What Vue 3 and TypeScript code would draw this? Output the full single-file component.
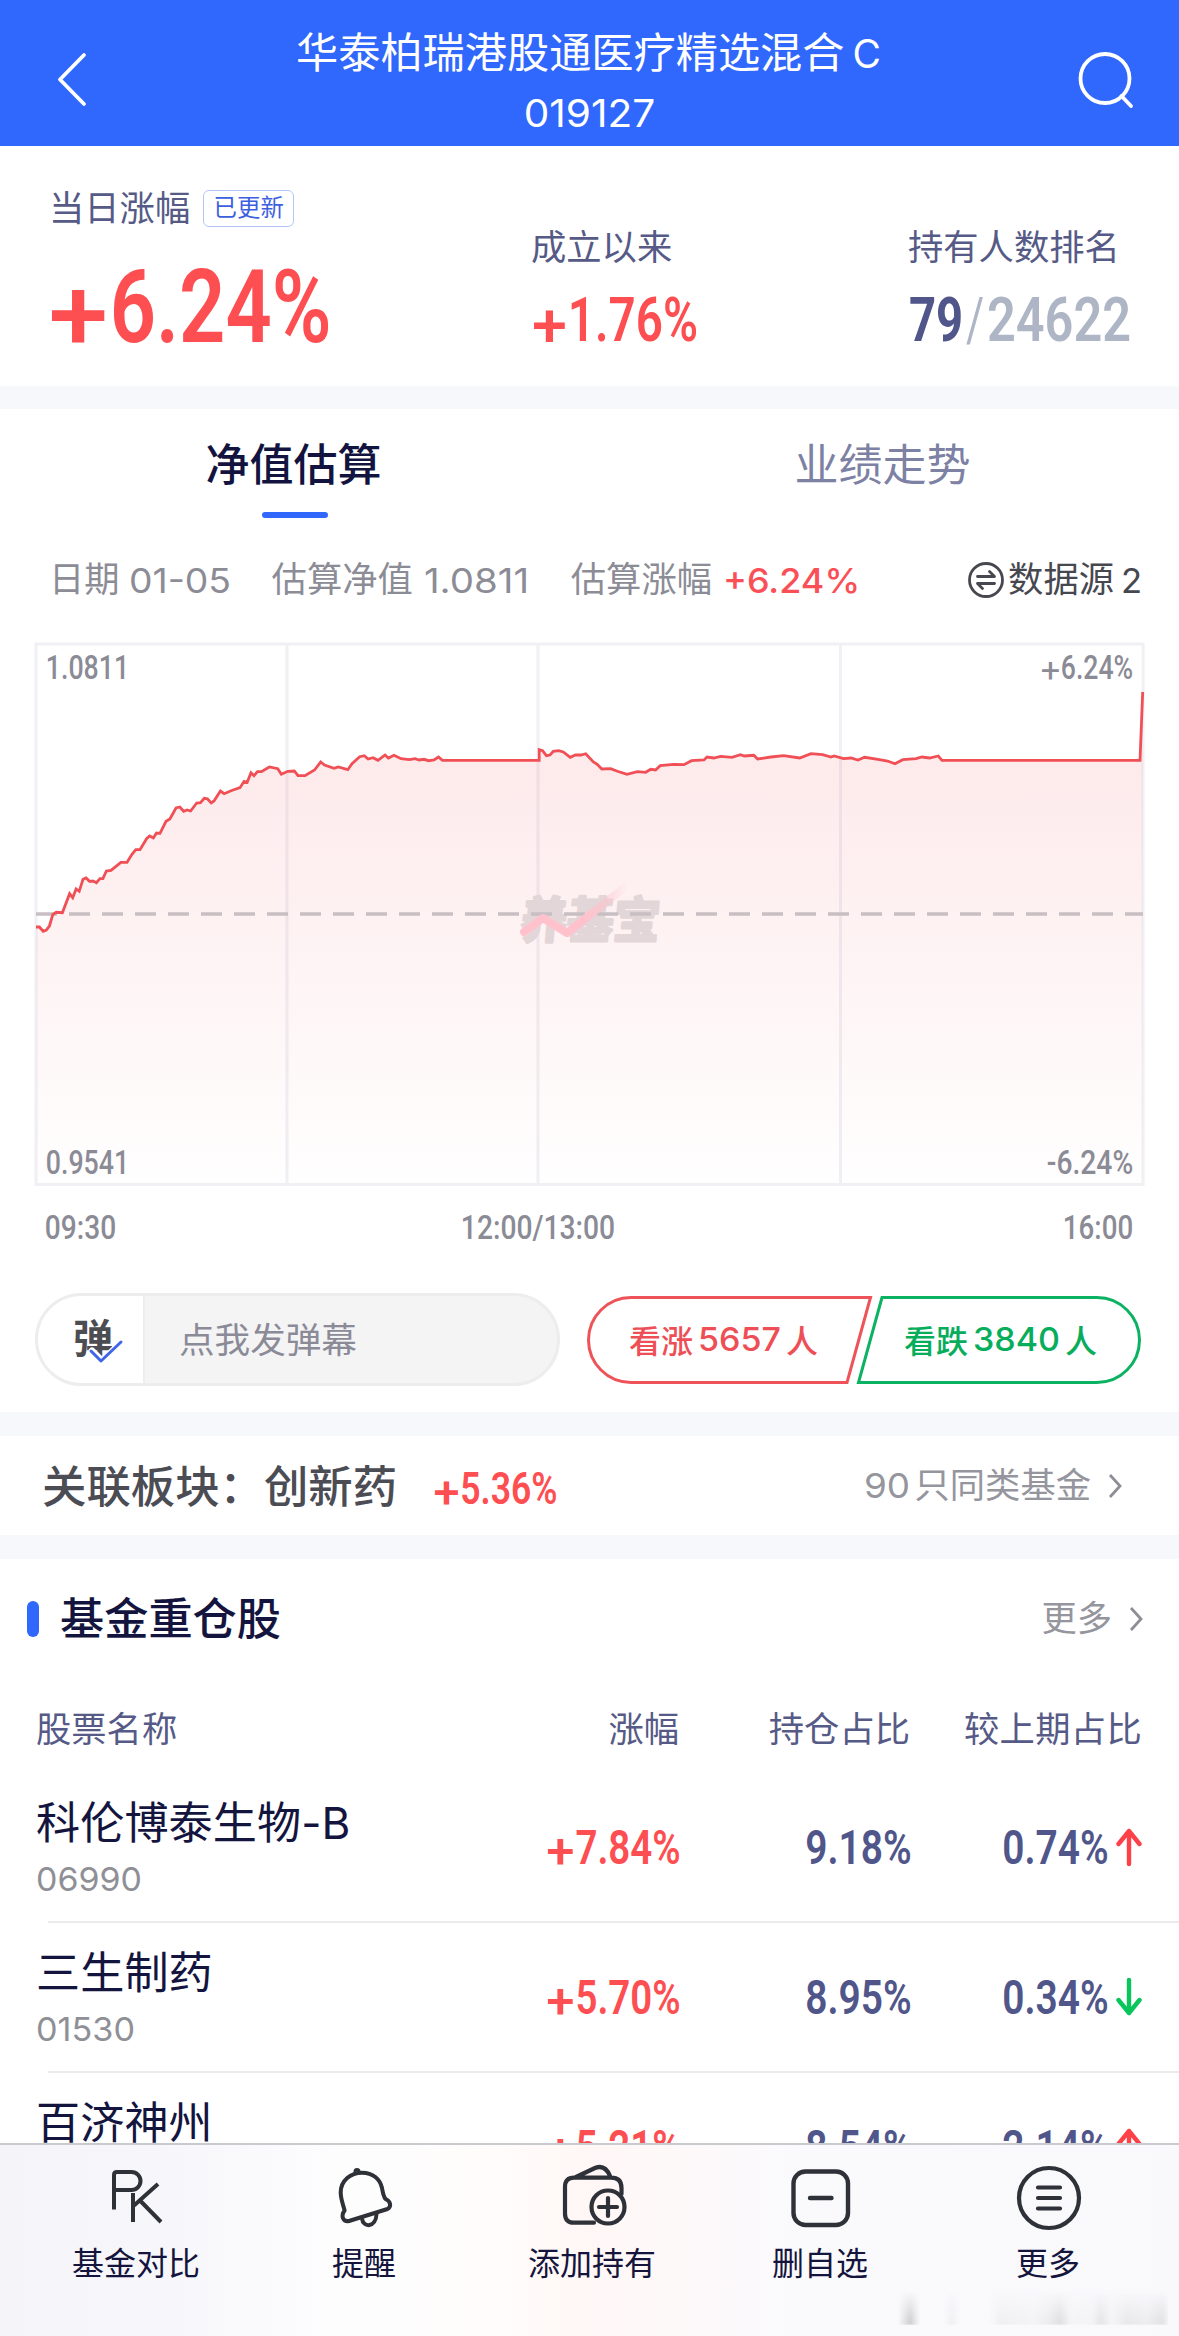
<script setup lang="ts">
import { h, type FunctionalComponent } from 'vue'

interface NumProps {
  t: string
  w: number
  h: number
  sf?: boolean
  weight?: number
}

/* A figure set to an exact ink width (w) and cap height (h). */
const Num: FunctionalComponent<NumProps> = (p) => {
  const size = p.h / (p.sf ? 0.727 : 0.711)
  const pad = size * (p.sf ? 0.06 : 0.035)
  const run = (t: string, x: number, w: number, dy: number, weight: number) =>
    h(
      'text',
      {
        x: x - pad,
        y: p.h + dy,
        textLength: w + pad * 2,
        lengthAdjust: 'spacingAndGlyphs',
        fill: 'currentColor',
        'font-family': p.sf ? 'Inter, sans-serif' : 'Roboto, sans-serif',
        'font-size': size,
        'font-weight': weight,
      },
      t,
    )
  const weight = p.weight ?? (p.sf ? 400 : 600)
  /* The condensed face has a light, wide plus sign that stands on the baseline. */
  const signed = !p.sf && p.t.startsWith('+')
  const parts = signed
    ? [
        run('+', 0, p.w * 0.19, size * 0.08, weight - 100),
        run(p.t.slice(1), p.w * 0.222, p.w * 0.778, 0, weight),
      ]
    : [run(p.t, 0, p.w, 0, weight)]
  return h('svg', { width: p.w, height: p.h, style: 'overflow:visible;flex:none;display:block' }, parts)
}
Num.props = {
  t: { type: String, required: true },
  w: { type: Number, required: true },
  h: { type: Number, required: true },
  sf: Boolean,
  weight: Number,
}

const trend =
  '0,283 3.4,283 7.2,287.3 10.3,286 13.4,282 16.8,270.7 20.2,268.3 26.4,268.7 33.6,249.7 36.7,253.7 40.1,245 43.2,247.3 47,235.3 50.1,234 53.5,237.3 57,237 60.4,238.7 63.9,234.7 66.9,234.7 70.4,227 75,226.3 84.9,218.3 91,218.3 96,210.3 99.8,205.7 104,205.7 110.6,194.7 113.6,192 117.4,194 120.5,189 124,189.3 130,177.3 133.9,175 140,164 143.8,163 147.7,167.3 151,166 154.6,167 160.7,159 164.5,158.7 168.3,154.3 171.4,154.7 175.2,159 178,157 184.4,147 188.2,149.7 195.1,146.7 204,143.7 208.1,137.3 211.2,138.3 215,128.7 218,131.7 221.5,127.7 225.4,127.7 233.4,123 241.8,124.7 245.3,130.3 251.8,127.3 258.3,127 262,131.7 269,131.7 278.5,126 284.7,118 288.5,121 298,124.3 302.3,123 311.8,125.7 316,119.7 323.7,112.7 328.3,111.7 332.1,115 337,113.7 342,116.3 349,111 352.4,114 358,111.3 365,114.7 373.4,115.7 379.2,114.7 383,116 388,115.3 392.6,116.7 398,116 402.5,113 406.4,116.3 503.2,116.3 503.2,105.7 506.6,106.7 510.4,111.7 514,111 517.3,107.3 522.7,106.7 527.3,108 534.2,113.3 539.5,111 544.9,111 549.7,109.7 557.4,118 561.2,120.3 565.8,125 574.6,124.7 581.4,127.3 591,130.3 601.3,127.7 609.7,128.3 614.7,125.3 619.6,126 624.2,121.7 637.6,120.3 648,120.7 655.5,116.7 668,116 671,113 677.7,114 684.6,112.3 696,113.3 704.4,110.7 708.3,112 717.8,111.3 721.6,115 735,113 747.6,111.7 763.7,114 775,109.7 786.6,110.7 795,113 798,112 807.6,114.7 815,114 822,116 828.6,113.3 842,115.3 851.5,117 859,119.7 866.8,115.7 880,114.7 886,113 893.5,114 902.3,112 906,116.3 1104,116.3 1106.7,48'

interface Holding {
  name: string
  code: string
  codeW: number
  change: string
  share: string
  delta: string
  up: boolean
}

const holdings: Holding[] = [
  { name: '科伦博泰生物-B', code: '06990', codeW: 102, change: '+7.84%', share: '9.18%', delta: '0.74%', up: true },
  { name: '三生制药', code: '01530', codeW: 95, change: '+5.70%', share: '8.95%', delta: '0.34%', up: false },
  { name: '百济神州', code: '06160', codeW: 95, change: '+5.21%', share: '8.54%', delta: '2.14%', up: true },
]
</script>

<template>
  <div class="page">
    <header class="top">
      <svg class="back" width="32" height="56" viewBox="0 0 32 56">
        <path d="M28 3 4 27.500 28 52" fill="none" stroke="#fff" stroke-width="3.800" stroke-linecap="round" stroke-linejoin="round" />
      </svg>
      <div class="heading">
        <h1>华泰柏瑞港股通医疗精选混合<span>C</span></h1>
        <Num t="019127" :w="127" :h="28" sf />
      </div>
      <svg class="search" width="60" height="60" viewBox="0 0 60 60">
        <g fill="none" stroke="#fff" stroke-width="3.800" stroke-linecap="round">
          <circle cx="28" cy="28.500" r="24.500" />
          <path d="M44.500 46 54 56" />
        </g>
      </svg>
    </header>

    <main class="scroll">
      <section class="summary">
        <div class="today">
          <div class="label">当日涨幅<span class="badge">已更新</span></div>
          <Num class="red big" t="+6.24%" :w="276" :h="73" />
        </div>
        <div class="stat">
          <div class="label">成立以来</div>
          <Num class="red" t="+1.76%" :w="162" :h="43" />
        </div>
        <div class="stat">
          <div class="label">持有人数排名</div>
          <div class="rank">
            <Num class="navy" t="79" :w="50" :h="43" :weight="700" />
            <Num class="slate" t="/" :w="14" :h="43" :weight="400" />
            <Num class="slate" t="24622" :w="140" :h="43" />
          </div>
        </div>
      </section>

      <div class="gap first"></div>

      <section class="valuation">
        <nav class="tabs">
          <div class="tab active">净值估算<i></i></div>
          <div class="tab">业绩走势</div>
        </nav>
        <div class="info">
          <span>日期</span><Num class="i1" t="01-05" :w="98" :h="25" sf />
          <span class="i2">估算净值</span><Num class="i3" t="1.0811" :w="101" :h="25" sf />
          <span class="i4">估算涨幅</span><Num class="i3 red" t="+6.24%" :w="133" :h="25" sf :weight="500" />
          <div class="source">
            <svg width="38" height="38" viewBox="0 0 38 38" fill="none" stroke="#47484f" stroke-width="2.800" stroke-linecap="round" stroke-linejoin="round">
              <circle cx="19" cy="19" r="16.500" />
              <path d="M10.500 15.500h17l-5-5M27.500 22.500h-17l5 5" />
            </svg>
            <span>数据源</span><Num t="2" :w="17" :h="25" sf />
          </div>
        </div>

        <svg class="chart" width="1111" height="599" viewBox="-2 -2 1111 599">
          <defs>
            <linearGradient id="area" gradientUnits="userSpaceOnUse" x1="0" y1="50" x2="0" y2="540">
              <stop offset="0" stop-color="#f04650" stop-opacity=".13" />
              <stop offset="1" stop-color="#f04650" stop-opacity=".005" />
            </linearGradient>
            <linearGradient id="streak" x1="0" y1="0" x2="1" y2="0">
              <stop offset=".6" stop-color="#ffc2cd" />
              <stop offset="1" stop-color="#ffc2cd" stop-opacity="0" />
            </linearGradient>
          </defs>
          <g fill="none" stroke="#f0f0f5" stroke-width="3">
            <rect x="0" y="0" width="1107" height="540.500" />
            <path d="M251 0v540M502 0v540M804.500 0v540" />
          </g>
          <polygon :points="`${trend} 1106.700,540 0,540`" fill="url(#area)" />
          <g transform="translate(484 288) skewX(-5)">
            <text
              textLength="139"
              lengthAdjust="spacingAndGlyphs"
              font-family="Noto Sans CJK SC, sans-serif"
              font-size="49"
              font-weight="700"
              fill="#e2d6d8"
              stroke="#e2d6d8"
              stroke-width="3"
              stroke-linejoin="round"
              y="6"
            >养基宝</text>
          </g>
          <path d="M0 270h1107" stroke="#c8bfc3" stroke-width="3.500" stroke-dasharray="21 12" />
          <path d="M488 288 507 274 531 289 592 241" fill="none" stroke="url(#streak)" stroke-width="8" stroke-linecap="round" stroke-linejoin="round" />
          <polyline :points="trend" fill="none" stroke="#f04f55" stroke-width="2.800" />
          <g class="axis">
            <Num x="11" y="11" t="1.0811" :w="81" :h="24" :weight="500" />
            <Num x="1006" y="11" t="+6.24%" :w="90" :h="24" :weight="500" />
            <Num x="11" y="506" t="0.9541" :w="81" :h="24" :weight="500" />
            <Num x="1012" y="506" t="-6.24%" :w="84" :h="24" :weight="500" />
            <Num x="10" y="571" t="09:30" :w="69" :h="24" :weight="500" />
            <Num x="426" y="571" t="12:00/13:00" :w="152" :h="24" :weight="500" />
            <Num x="1028" y="571" t="16:00" :w="68" :h="24" :weight="500" />
          </g>
        </svg>

        <div class="actions">
          <div class="barrage">
            <div class="toggle">
              <span>弹</span>
              <svg width="36" height="26" viewBox="0 0 36 26" fill="none" stroke-linecap="round" stroke-linejoin="round">
                <path d="M4 13 14 23 33 5" stroke="#fff" stroke-width="7" />
                <path d="M3 13 13 23 33 4" stroke="#3f66e8" stroke-width="3" />
              </svg>
            </div>
            <div class="hint">点我发弹幕</div>
          </div>
          <div class="votes">
            <svg class="outline" width="558" height="90" viewBox="0 0 558 90" fill="none" stroke-width="3">
              <path d="M45 2.500H284.500L261 87.500H45A42.500 42.500 0 0 1 45 2.500Z" stroke="#ee5359" />
              <path d="M296 2.500H511A42.500 42.500 0 0 1 511 87.500H272.500Z" stroke="#0bb261" />
            </svg>
            <div class="vote up">看涨<Num t="5657" :w="79" :h="24" sf :weight="500" />人</div>
            <div class="vote down">看跌<Num t="3840" :w="83" :h="24" sf :weight="500" />人</div>
          </div>
        </div>
      </section>

      <div class="gap"></div>

      <section class="related">
        <span class="sector">关联板块：创新药</span>
        <Num class="red pct" t="+5.36%" :w="121" :h="32" />
        <div class="more">
          <Num t="90" :w="42" :h="25" sf /><span class="similar">只同类基金</span>
          <svg class="chevron" width="14" height="26" viewBox="0 0 14 26"><path d="M2 2 12 13 2 24" /></svg>
        </div>
      </section>

      <div class="gap"></div>

      <section class="holdings">
        <div class="title">
          <i></i>
          <h2>基金重仓股</h2>
          <div class="more">
            <span>更多</span>
            <svg class="chevron" width="14" height="26" viewBox="0 0 14 26"><path d="M2 2 12 13 2 24" /></svg>
          </div>
        </div>
        <div class="cols head">
          <span>股票名称</span><span>涨幅</span><span>持仓占比</span><span>较上期占比</span>
        </div>
        <template v-for="s in holdings" :key="s.name">
          <div class="cols row">
            <div class="stock">
              <div class="name">{{ s.name }}</div>
              <Num class="code" :t="s.code" :w="s.codeW" :h="24" sf />
            </div>
            <Num class="red" :t="s.change" :w="131" :h="34" />
            <Num class="navy" :t="s.share" :w="103" :h="34" />
            <div class="delta">
              <Num class="navy" :t="s.delta" :w="103" :h="34" />
              <svg width="26" height="40" viewBox="0 0 26 40" fill="none" stroke-width="4.400" stroke-linecap="round" stroke-linejoin="round">
                <path v-if="s.up" d="M13 37V4M2.500 17 13 4 23.500 17" stroke="#fd4149" />
                <path v-else d="M13 3V36M2.500 23 13 36 23.500 23" stroke="#09c55c" />
              </svg>
            </div>
          </div>
          <div class="rule"></div>
        </template>
      </section>
    </main>

    <footer class="bar">
      <div class="item">
        <svg width="72" height="72" viewBox="0 0 72 72" stroke-width="4">
          <path d="M14 47.500V13Q14 10 17 10H31.500A8.800 8.800 0 0 1 31.500 28H14M33 31V60M58 22 34 43.500M40 38.500 61 60" />
        </svg>
        <span>基金对比</span>
      </div>
      <div class="item">
        <svg width="72" height="72" viewBox="0 0 72 72" stroke-width="4" stroke-linejoin="round">
          <path d="M16.600 48.500C15 42 12.700 37 12.700 30.500C12.700 18 23 10.700 34 10.700C45 10.700 52 17 54 26C55 31 55.300 34 57.500 37C63 39.500 63.500 45 59.500 47L21 59C15 60 12.500 54 16.600 48.500Z" />
          <path d="M34 56.500C35 66 48 66 48.500 52" />
          <circle cx="29" cy="9.500" r="1.500" />
        </svg>
        <span>提醒</span>
      </div>
      <div class="item">
        <svg width="72" height="72" viewBox="0 0 72 72" stroke-width="4.200" stroke-linejoin="round" stroke-linecap="round">
          <path d="M38 60.700H18Q9 60.700 9 51.700V24.700Q9 15.700 18 15.700H55Q65.500 15.700 65.500 26V32M20 15 39 6Q49 2 54 14" />
          <circle cx="52" cy="45" r="16.500" />
          <path d="M43 45H61M52 36V54" />
        </svg>
        <span>添加持有</span>
      </div>
      <div class="item">
        <svg width="72" height="72" viewBox="0 0 72 72" stroke-width="4.400" stroke-linecap="round">
          <rect x="9.500" y="9.500" width="54.500" height="53.500" rx="12" />
          <path d="M26 36H47.500" />
        </svg>
        <span>删自选</span>
      </div>
      <div class="item">
        <svg width="72" height="72" viewBox="0 0 72 72" stroke-width="4.200" stroke-linecap="round">
          <circle cx="37" cy="36" r="30" />
          <path d="M26 25.500H48M26 36H48M26 46.500H48" />
        </svg>
        <span>更多</span>
      </div>
      <div class="smudge"></div>
    </footer>
  </div>
</template>

<style>
body {
  background: #fff;
}
</style>

<style scoped>
.page {
  width: 1179px;
  height: 2336px;
  display: flex;
  flex-direction: column;
  overflow: hidden;
  background: #fff;
  font-family: Inter, 'Noto Sans CJK SC', sans-serif;
  font-size: 35.300px;
  color: #47484f;
  white-space: nowrap;
}
h1,
h2 {
  margin: 0;
  font-weight: 400;
}
.red {
  color: #fd4e52;
}
.navy {
  color: #50568a;
}
.slate {
  color: #aeb6c6;
}

.top {
  flex: none;
  height: 146px;
  display: flex;
  justify-content: space-between;
  background: #3067fd;
  color: #fff;
}
.back {
  margin: 52px 0 0 56px;
}
.search {
  margin: 50px 42px 0 0;
}
.heading {
  display: flex;
  flex-direction: column;
  align-items: center;
  padding: 23px 0 0 14px;
}
.heading h1 {
  font-size: 42.200px;
  line-height: 60px;
  height: 60px;
  margin: 0 2px 16px 0;
}
.heading h1 span {
  margin-left: 8px;
  font-size: 39px;
}

.scroll {
  flex: 1;
  min-height: 0;
  overflow: hidden;
}
.summary {
  height: 240px;
  display: grid;
  grid-template-columns: 482px 377px 1fr;
  padding-left: 52px;
}
.label {
  display: flex;
  align-items: center;
  height: 40px;
  line-height: 40px;
  margin-left: -3px;
  color: #565a86;
}
.today {
  padding-top: 43px;
}
.big {
  margin-top: 40px;
}
.badge {
  box-sizing: border-box;
  width: 91px;
  height: 37px;
  margin: -2px 0 0 13px;
  border: 1.500px solid #b4c6f5;
  border-radius: 6px;
  font-size: 23.400px;
  line-height: 34px;
  text-align: center;
  color: #3c5fe0;
}
.stat {
  padding-top: 82px;
}
.stat .label {
  margin-bottom: 30px;
}
.rank {
  display: flex;
  gap: 7px;
}

.gap {
  height: 24px;
  background: #f7f8fc;
}
.gap.first {
  height: 23px;
}

.valuation {
  height: 1003px;
}
.tabs {
  display: flex;
  height: 151px;
  box-sizing: border-box;
  padding-top: 26px;
}
.tab {
  width: 589px;
  display: flex;
  flex-direction: column;
  align-items: center;
  font-size: 44px;
  line-height: 60px;
  color: #7d81a4;
}
.tab:first-child {
  margin-left: -1px;
}
.tab.active {
  color: #12143f;
  font-weight: 500;
}
.tab i {
  width: 66px;
  height: 6px;
  margin: 17px 0 0 2px;
  border-radius: 3px;
  background: #3067fd;
}
.info {
  display: flex;
  align-items: center;
  height: 40px;
  line-height: 40px;
  padding: 0 39px 0 49px;
  color: #8c8c96;
}
.info .red {
  color: #fa4f56;
}
.i1 {
  margin-left: 11px;
}
.i2 {
  margin-left: 43px;
}
.i3 {
  margin-left: 13px;
}
.i4 {
  margin-left: 44px;
}
.source {
  display: flex;
  align-items: center;
  margin-left: auto;
  color: #47484f;
}
.source span {
  margin: 0 9px 0 3px;
}
.chart {
  display: block;
  margin: 42px 0 0 34px;
}
.axis {
  color: #8b8b96;
}

.actions {
  display: flex;
  align-items: center;
  margin: 52px 0 0 35px;
}
.barrage {
  box-sizing: border-box;
  width: 525px;
  height: 93px;
  display: flex;
  overflow: hidden;
  border: 3px solid #ededed;
  border-radius: 47px;
  background: #f4f4f5;
}
.toggle {
  position: relative;
  width: 105px;
  border-right: 2px solid #ededed;
  background: #fff;
  font-size: 40px;
  font-weight: 700;
  line-height: 86px;
  color: #4c4d52;
}
.toggle span {
  margin-left: 35px;
}
.toggle svg {
  position: absolute;
  left: 50px;
  top: 42px;
}
.hint {
  margin-left: 34px;
  line-height: 89px;
  font-size: 35.600px;
  color: #8b8b98;
}
.votes {
  position: relative;
  display: flex;
  width: 558px;
  height: 90px;
  margin-left: 26px;
}
.outline {
  position: absolute;
  inset: 0;
}
.vote {
  display: flex;
  align-items: center;
  gap: 7px;
  padding-bottom: 2px;
  font-size: 32px;
  font-weight: 500;
}
.up {
  width: 275px;
  padding-left: 43px;
  box-sizing: border-box;
  color: #ee4f56;
}
.down {
  padding-left: 43px;
  color: #08ad5c;
}

.related {
  height: 99px;
  display: flex;
  align-items: center;
  padding: 0 57px 0 42px;
}
.sector {
  font-size: 44.400px;
  line-height: 60px;
  padding-top: 2px;
  font-weight: 500;
  color: #4b4c54;
}
.pct {
  margin: 4px 0 0 38px;
}
.more {
  display: flex;
  align-items: center;
  margin-left: auto;
  line-height: 40px;
  color: #95959e;
}
.chevron {
  margin-left: 17px;
  fill: none;
  stroke: #8e8e97;
  stroke-width: 2.800;
}
.similar {
  margin-left: 7px;
}

.title {
  display: flex;
  align-items: center;
  height: 60px;
  padding: 30px 36px 60px 27px;
}
.title i {
  width: 12px;
  height: 36px;
  border-radius: 6px;
  background: #3067fd;
}
.title h2 {
  margin-left: 21px;
  font-size: 44.200px;
  line-height: 60px;
  font-weight: 500;
  color: #14153f;
}
.cols {
  display: grid;
  grid-template-columns: 400px 243px 231px 232px;
  padding-left: 36px;
  justify-items: end;
}
.cols > :first-child {
  justify-self: start;
}
.head {
  height: 41px;
  line-height: 42px;
  margin-bottom: 23px;
  color: #565a86;
}
.head span:last-child {
  letter-spacing: 0.300px;
}
.row {
  height: 148px;
  align-items: center;
}
.stock {
  align-self: start;
  padding-top: 25px;
}
.name {
  height: 50px;
  font-size: 44.100px;
  letter-spacing: 0.100px;
  line-height: 50px;
  color: #14153f;
}
.code {
  margin: 19px 0 0 2px;
  color: #8f8f96;
}
.delta {
  display: flex;
  align-items: center;
  gap: 9px;
}
.rule {
  height: 2px;
  margin-left: 48px;
  background: #ebebed;
}

.bar {
  position: relative;
  flex: none;
  box-sizing: border-box;
  height: 193px;
  display: flex;
  padding: 17px 17px 0 22px;
  border-top: 2px solid #c9cacd;
  background: linear-gradient(90deg, #f4f4f9 0, #f7f7fb 14%, #fdfdfe 29%, #fffdfc 40%, #fff7f6 50%, #fdf9fa 60%, #fafafd 68%, #f9f9fc 100%);
}
.item {
  width: 228px;
  display: flex;
  flex-direction: column;
  align-items: center;
  font-size: 32px;
  line-height: 40px;
  color: #14143c;
}
.item svg {
  fill: none;
  stroke: #2f3138;
  margin-bottom: 10px;
}
.smudge {
  position: absolute;
  left: 898px;
  top: 146px;
  width: 270px;
  height: 34px;
  filter: blur(1.500px);
  background: linear-gradient(90deg, transparent 0, #c9c9cb 4.500%, transparent 8%, transparent 17%, #efeff1 20%, transparent 23%, transparent 34%, #eeeef0 38%, #f3f3f5 50%, #eaeaec 56%, #dcdcde 60%, #f4f4f6 64%, #f2f2f4 72%, #e2e2e4 75%, #f4f4f6 79%, #e6e6e8 85%, #ececee 92%, #dfdfe1 98%, #efeff1 100%);
  -webkit-mask: linear-gradient(#0000, #000);
  mask: linear-gradient(#0000, #000);
}
</style>
